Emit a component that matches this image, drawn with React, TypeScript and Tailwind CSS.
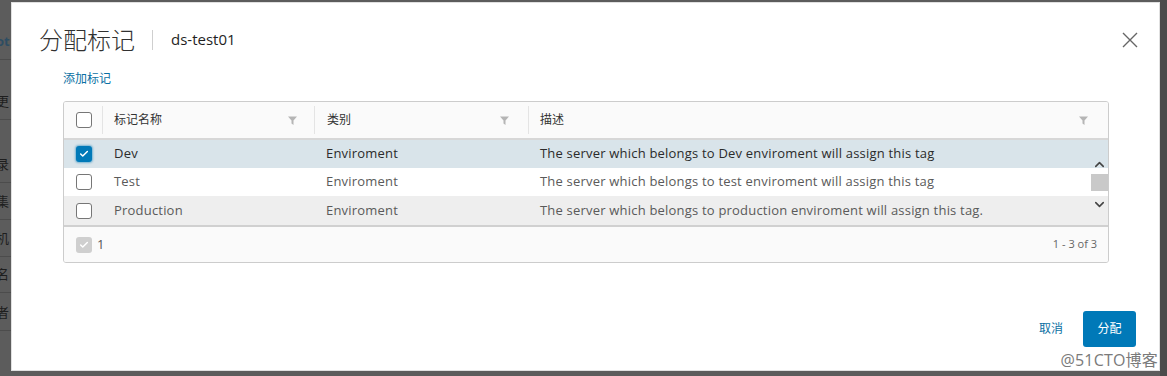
import { ChevronUp, ChevronDown, Check } from "lucide-react";

const rows = [
  { name: "Dev", type: "Enviroment", desc: "The server which belongs to Dev enviroment will assign this tag", selected: true },
  { name: "Test", type: "Enviroment", desc: "The server which belongs to test enviroment will assign this tag" },
  { name: "Production", type: "Enviroment", desc: "The server which belongs to production enviroment will assign this tag.", hover: true },
];

const sideChars = [
  { c: "ot", y: "h-[60px]", blue: true },
  { c: "更", y: "h-[60px]" },
  { c: "录", y: "h-[63px]" },
  { c: "集", y: "h-[37px]" },
  { c: "机", y: "h-[37px]" },
  { c: "名", y: "h-[36px]" },
  { c: "者", y: "h-[38px]" },
];

const Filter = () => (
  <svg width="9" height="9" viewBox="0 0 9 9" className="shrink-0">
    <path d="M0 0.5h9L5.5 4.5V9L3.5 7.5V4.5Z" fill="#b5b5b5" />
  </svg>
);

const Box = ({ checked, disabled }: { checked?: boolean; disabled?: boolean }) => (
  <div
    className={
      checked
        ? "w-4 h-4 rounded-[3px] bg-[#0079b8] flex items-center justify-center shadow-[0_0_2px_1px_rgba(0,121,184,0.45)]"
        : disabled
        ? "w-4 h-4 rounded-[3px] bg-[#cfcfcf] flex items-center justify-center"
        : "w-4 h-4 rounded-[3px] border border-[#767676] bg-white"
    }
  >
    {(checked || disabled) && <Check size={10} strokeWidth={3.5} color="white" />}
  </div>
);

export default function App() {
  return (
    <div className="w-[1167px] h-[376px] bg-[#5c5c5c] flex overflow-hidden relative font-['Open_Sans','Noto_Sans_CJK_SC',sans-serif]">
      {/* backdrop strip */}
      <div className="w-[11px] shrink-0 flex flex-col overflow-hidden">
        {sideChars.map((s, i) => (
          <div
            key={i}
            className={`${s.y} shrink-0 border-b border-[#4c4c4c] flex items-end pb-[8px] text-[13px] whitespace-nowrap -ml-[4px] ${
              s.blue ? "text-[#2d4d63] font-bold" : "text-[#1e1e1e]"
            }`}
          >
            {s.c}
          </div>
        ))}
      </div>

      {/* modal */}
      <div className="mt-[2px] w-[1149px] h-[369px] shrink-0 bg-white flex flex-col pl-[27px] pr-[23px] border border-[#e0e0e0]">
        <div className="flex items-center pt-[18px] h-[55px]">
          <span className="text-[24px] text-[#313131] font-light leading-none">分配标记</span>
          <div className="w-px h-[20px] bg-[#cfcfcf] ml-[17px] mr-[18px]" />
          <span className="text-[15px] text-[#1f1f1f] leading-none">ds-test01</span>
          <svg width="16" height="16" viewBox="0 0 16 16" className="ml-auto -mr-[2px]">
            <path d="M1 1L15 15M15 1L1 15" stroke="#666" strokeWidth="1.4" />
          </svg>
        </div>

        <div className="pl-[24px] pr-[27px]">
          <div className="text-[12px] text-[#0a6fa3] mt-[13px] leading-[16px]">添加标记</div>

          {/* datagrid */}
          <div className="mt-[14px] border border-[#cccccc] rounded-[3px] overflow-hidden">
            <div className="flex h-[38px] bg-[#fafafa] border-b-2 border-[#d7d7d7] text-[12px] text-[#333]">
              <div className="w-[38px] flex items-center justify-center pl-[1px]">
                <Box />
              </div>
              <div className="w-[212px] flex items-center border-l border-[#e4e4e4] my-[4px] pl-[11px] pr-[17px]">
                <span className="flex-1">标记名称</span>
                <Filter />
              </div>
              <div className="w-[214px] flex items-center border-l border-[#e4e4e4] my-[4px] pl-[12px] pr-[19px]">
                <span className="flex-1">类别</span>
                <Filter />
              </div>
              <div className="flex-1 flex items-center border-l border-[#e4e4e4] my-[4px] pl-[11px] pr-[20px]">
                <span className="flex-1">描述</span>
                <Filter />
              </div>
            </div>

            <div className="flex border-b-2 border-[#d0d0d0]">
              <div className="flex-1">
                {rows.map((r) => (
                  <div
                    key={r.name}
                    className={`flex items-center text-[13px] tracking-[0.2px] ${
                      r.selected
                        ? "bg-[#d9e4ea] text-[#2b2b2b] h-[28px]"
                        : r.hover
                        ? "bg-[#eeeeee] text-[#5a5a5a] h-[29px]"
                        : "bg-white text-[#5a5a5a] h-[28px]"
                    }`}
                  >
                    <div className="w-[38px] flex items-center justify-center pl-[1px]">
                      <Box checked={r.selected} />
                    </div>
                    <div className="w-[212px] pl-[12px]">{r.name}</div>
                    <div className="w-[214px] pl-[12px]">{r.type}</div>
                    <div className="flex-1 pl-[12px] whitespace-nowrap">{r.desc}</div>
                  </div>
                ))}
              </div>
              <div className="w-[17px] flex flex-col items-center bg-[#f2f2f2]">
                <div className="h-[28px] w-full bg-[#d9e4ea] flex items-end justify-center">
                  <ChevronUp size={15} strokeWidth={2.5} color="#444" className="-mb-[4px]" />
                </div>
                <div className="h-[28px] w-full bg-white flex items-center">
                  <div className="w-full h-[17px] bg-[#c9c9c9]" />
                </div>
                <div className="h-[29px] w-full bg-[#eeeeee] flex items-start justify-center">
                  <ChevronDown size={15} strokeWidth={2.5} color="#444" className="mt-[1px]" />
                </div>
              </div>
            </div>

            <div className="h-[35px] bg-[#fafafa] flex items-center pl-[12px] pr-[11px]">
              <Box disabled />
              <span className="ml-[5px] text-[13px] text-[#555]">1</span>
              <span className="ml-auto text-[11px] text-[#666]">1 - 3 of 3</span>
            </div>
          </div>
        </div>

        <div className="mt-auto mb-[23px] flex items-center justify-end">
          <span className="text-[12px] text-[#0a6fa3] mr-[20px]">取消</span>
          <div className="w-[53px] h-[36px] rounded-[3px] bg-[#0079b8] text-white text-[12px] flex items-center justify-center">
            分配
          </div>
        </div>
      </div>

      <div className="flex-1 bg-[#4b4b4b]" />

      <div className="absolute right-[9px] bottom-[8px] text-[16px] text-[#7a7a7a] leading-none tracking-[0.2px]">
        @51CTO博客
      </div>
    </div>
  );
}
